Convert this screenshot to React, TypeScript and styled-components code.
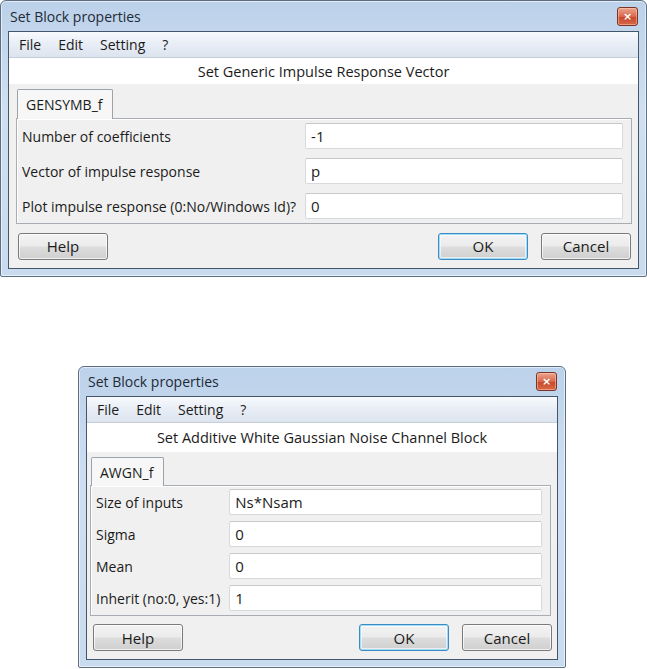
import React from 'react';
import styled, { createGlobalStyle } from 'styled-components';

const GlobalStyle = createGlobalStyle`
  html, body {
    margin: 0;
    padding: 0;
    background: #ffffff;
  }
  body {
    font-family: 'Open Sans', 'Noto Sans', 'Liberation Sans', sans-serif;
    font-size: 14px;
    color: #1b1b1b;
  }
`;

const Page = styled.div`
  display: flex;
  flex-direction: column;
  align-items: flex-start;
  width: 647px;
  height: 669px;
  overflow: hidden;
`;

const Window = styled.div<{ $width: number; $offsetX: number; $offsetY: number }>`
  display: flex;
  flex-direction: column;
  box-sizing: border-box;
  width: ${({ $width }) => $width}px;
  margin-left: ${({ $offsetX }) => $offsetX}px;
  margin-top: ${({ $offsetY }) => $offsetY}px;
  padding: 0 7px 7px 7px;
  border: 1px solid #5f6f82;
  border-radius: 6px 6px 2px 2px;
  background: linear-gradient(180deg, #bcd2ea 0%, #cfdff1 40%, #c9dbee 100%);
  box-shadow: inset 0 0 0 1px rgba(255, 255, 255, 0.55);
`;

const TitleBar = styled.div<{ $height: number }>`
  display: flex;
  align-items: center;
  justify-content: space-between;
  height: ${({ $height }) => $height}px;
  padding-left: 2px;
`;

const Title = styled.span`
  font-size: 14px;
  color: #1e2a36;
`;

const CloseButton = styled.div`
  display: flex;
  align-items: center;
  justify-content: center;
  width: 19px;
  height: 17px;
  margin-right: 1px;
  border: 1px solid #7d3426;
  border-radius: 3px;
  background: linear-gradient(180deg, #eba58f 0%, #d9684b 50%, #c7472b 51%, #d66a48 100%);
  box-shadow: inset 0 0 0 1px rgba(255, 210, 190, 0.5);
  color: #ffffff;
  font-family: 'DejaVu Sans', sans-serif;
  font-size: 11px;
  font-weight: bold;
  line-height: 1;
`;

const Client = styled.div`
  display: flex;
  flex-direction: column;
  border: 1px solid #46566a;
  background: #f0f0f0;
`;

const MenuBar = styled.div`
  display: flex;
  align-items: center;
  gap: 17px;
  height: 25px;
  padding-left: 10px;
  background: linear-gradient(180deg, #f8fafd 0%, #e9eef6 45%, #dce4ef 100%);
  border-bottom: 1px solid #c4cdd9;
`;

const MenuItem = styled.span`
  color: #1b1b1b;
`;

const Subtitle = styled.div<{ $height: number }>`
  display: flex;
  align-items: center;
  justify-content: center;
  height: ${({ $height }) => $height}px;
  background: #ffffff;
  font-size: 14.5px;
`;

const Body = styled.div<{ $sideLeft: number; $sideRight: number }>`
  display: flex;
  flex-direction: column;
  padding: 5px ${({ $sideRight }) => $sideRight}px 0 ${({ $sideLeft }) => $sideLeft}px;
`;

const TabStrip = styled.div`
  display: flex;
  padding-left: 1px;
`;

const Tab = styled.div<{ $height: number }>`
  display: flex;
  align-items: center;
  height: ${({ $height }) => $height}px;
  padding: 0 10px 0 8px;
  margin-bottom: -1px;
  border: 1px solid #9ca3ab;
  border-bottom: none;
  border-radius: 2px 2px 0 0;
  background: #f7f7f7;
  position: relative;
  z-index: 1;
`;

const Panel = styled.div<{ $rowGap: number; $padTop: number; $padBottom: number }>`
  display: grid;
  grid-template-columns: max-content 1fr;
  column-gap: 9px;
  row-gap: ${({ $rowGap }) => $rowGap}px;
  align-items: center;
  padding: ${({ $padTop }) => $padTop}px 8px ${({ $padBottom }) => $padBottom}px 5px;
  border: 1px solid #a8adb3;
  box-shadow: inset 1px 1px 0 #ffffff;
  background: #f0f0f0;
`;

const Label = styled.span`
  white-space: nowrap;
`;

const Field = styled.div<{ $height: number }>`
  display: flex;
  align-items: center;
  box-sizing: border-box;
  height: ${({ $height }) => $height}px;
  padding-left: 5px;
  border: 1px solid #d7d9dc;
  border-top-color: #c5c8cc;
  border-radius: 2px;
  background: #ffffff;
  font-size: 15px;
`;

const ButtonRow = styled.div<{ $padLeft: number; $padRight: number; $height: number }>`
  display: flex;
  align-items: center;
  gap: 13px;
  height: ${({ $height }) => $height}px;
  padding: 0 ${({ $padRight }) => $padRight}px 0 ${({ $padLeft }) => $padLeft}px;
`;

const Spacer = styled.div`
  flex: 1;
`;

const Button = styled.div<{ $default?: boolean }>`
  display: flex;
  align-items: center;
  justify-content: center;
  box-sizing: border-box;
  width: 90px;
  height: 27px;
  border: 1px solid ${({ $default }) => ($default ? '#3c8bc4' : '#7a7a7a')};
  border-radius: 3px;
  background: linear-gradient(180deg, #f3f3f3 0%, #ebebeb 48%, #dddddd 52%, #cfcfcf 100%);
  box-shadow: ${({ $default }) =>
    $default ? 'inset 0 0 0 1px #9fdcf5, inset 0 0 0 2px rgba(255,255,255,0.6)' : 'inset 0 0 0 1px rgba(255,255,255,0.7)'};
  font-size: 15px;
  color: #1b1b1b;
`;

type Row = { label: string; value: string };

type DialogProps = {
  width: number;
  offsetX: number;
  offsetY: number;
  titleHeight: number;
  subtitle: string;
  subtitleHeight: number;
  tab: string;
  tabHeight: number;
  rows: Row[];
  rowGap: number;
  fieldHeight: number;
  padTop: number;
  padBottom: number;
  sideLeft: number;
  sideRight: number;
  helpLeft: number;
  cancelRight: number;
  buttonRowHeight: number;
};

const Dialog: React.FC<DialogProps> = (p) => (
  <Window $width={p.width} $offsetX={p.offsetX} $offsetY={p.offsetY}>
    <TitleBar $height={p.titleHeight}>
      <Title>Set Block properties</Title>
      <CloseButton>×</CloseButton>
    </TitleBar>
    <Client>
      <MenuBar>
        <MenuItem>File</MenuItem>
        <MenuItem>Edit</MenuItem>
        <MenuItem>Setting</MenuItem>
        <MenuItem>?</MenuItem>
      </MenuBar>
      <Subtitle $height={p.subtitleHeight}>{p.subtitle}</Subtitle>
      <Body $sideLeft={p.sideLeft} $sideRight={p.sideRight}>
        <TabStrip>
          <Tab $height={p.tabHeight}>{p.tab}</Tab>
        </TabStrip>
        <Panel $rowGap={p.rowGap} $padTop={p.padTop} $padBottom={p.padBottom}>
          {p.rows.map((r) => (
            <React.Fragment key={r.label}>
              <Label>{r.label}</Label>
              <Field $height={p.fieldHeight}>{r.value}</Field>
            </React.Fragment>
          ))}
        </Panel>
      </Body>
      <ButtonRow $padLeft={p.helpLeft} $padRight={p.cancelRight} $height={p.buttonRowHeight}>
        <Button>Help</Button>
        <Spacer />
        <Button $default>OK</Button>
        <Button>Cancel</Button>
      </ButtonRow>
    </Client>
  </Window>
);

export default function App() {
  return (
    <Page>
      <GlobalStyle />
      <Dialog
        width={647}
        offsetX={0}
        offsetY={0}
        titleHeight={30}
        subtitle="Set Generic Impulse Response Vector"
        subtitleHeight={26}
        tab="GENSYMB_f"
        tabHeight={29}
        rows={[
          { label: 'Number of coefficients', value: '-1' },
          { label: 'Vector of impulse response', value: 'p' },
          { label: 'Plot impulse response (0:No/Windows Id)?', value: '0' },
        ]}
        rowGap={9}
        fieldHeight={26}
        padTop={4}
        padBottom={4}
        sideLeft={7}
        sideRight={6}
        helpLeft={9}
        cancelRight={7}
        buttonRowHeight={44}
      />
      <Dialog
        width={488}
        offsetX={78}
        offsetY={89}
        titleHeight={29}
        subtitle="Set Additive White Gaussian Noise Channel Block"
        subtitleHeight={29}
        tab="AWGN_f"
        tabHeight={28}
        rows={[
          { label: 'Size of inputs', value: 'Ns*Nsam' },
          { label: 'Sigma', value: '0' },
          { label: 'Mean', value: '0' },
          { label: 'Inherit (no:0, yes:1)', value: '1' },
        ]}
        rowGap={6}
        fieldHeight={26}
        padTop={3}
        padBottom={4}
        sideLeft={3}
        sideRight={6}
        helpLeft={6}
        cancelRight={5}
        buttonRowHeight={43}
      />
    </Page>
  );
}
